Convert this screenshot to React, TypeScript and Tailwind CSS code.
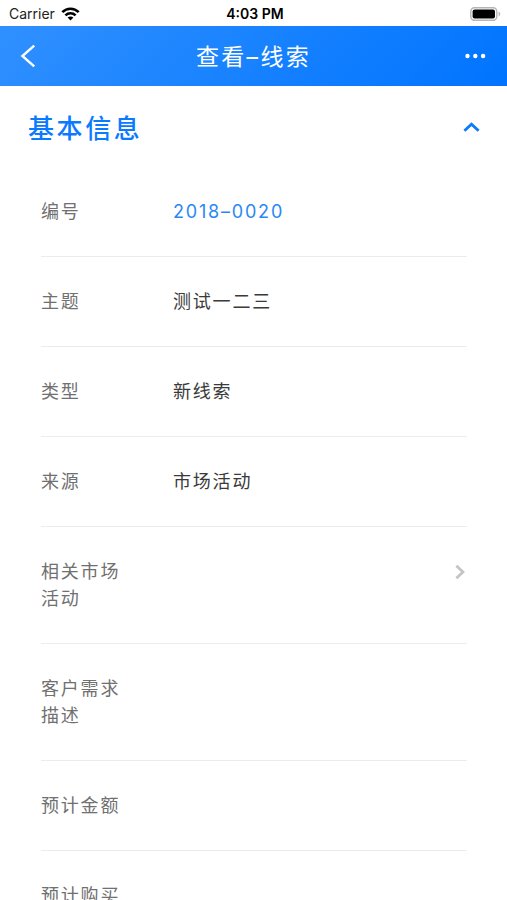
import React from "react"

type Field = { id: string, label: string, value?: string, highlight?: boolean, picker?: boolean }

const fields: Field[] = [
  { id: "code", label: "编号", value: "2018–0020", highlight: true },
  { id: "subject", label: "主题", value: "测试一二三" },
  { id: "type", label: "类型", value: "新线索" },
  { id: "source", label: "来源", value: "市场活动" },
  { id: "campaign", label: "相关市场活动", picker: true },
  { id: "demand", label: "客户需求描述" },
  { id: "amount", label: "预计金额" },
  { id: "purchase", label: "预计购买" },
]

const StatusBar = () => (
  <div className="grid h-[26px] shrink-0 grid-cols-3 items-center pt-[2px] pr-[6px] pl-[9px] text-[14px] leading-[20px] text-[#222]">
    <div className="flex items-center gap-[6px]">
      <span>Carrier</span>
      <svg width="19" height="14" viewBox="0 0 19 14" fill="none" stroke="#000" strokeWidth="2.6">
        <path d="M1.3 5.2C6 0.5 13 0.5 17.7 5.2" />
        <path d="M4.4 8.4C7.3 5.6 11.7 5.6 14.6 8.4" />
        <path d="M9.5 13.6L6.6 10.6C8.2 9.2 10.8 9.2 12.4 10.6Z" fill="#000" stroke="none" />
      </svg>
    </div>
    <span className="text-center font-semibold text-black">4:03 PM</span>
    <svg className="justify-self-end" width="31" height="14" viewBox="0 0 31 14">
      <rect x="0.8" y="0.8" width="26" height="12.4" rx="3.6" fill="#fff" stroke="#b5b5b5" strokeWidth="1.4" />
      <rect x="2.6" y="2.6" width="22.4" height="8.8" rx="2" fill="#000" />
      <path d="M28.6 4.6C30.8 5.4 30.8 8.6 28.6 9.4Z" fill="#b5b5b5" />
    </svg>
  </div>
)

const NavBar = () => (
  <header className="flex h-[60px] shrink-0 items-center justify-between bg-linear-[135deg] from-[#3090ff] to-[#0074ff] px-[20px] text-white">
    <button type="button" aria-label="返回" className="flex w-[24px]">
      <svg width="16" height="24" viewBox="0 0 16 24" fill="none" stroke="currentColor" strokeWidth="2.4">
        <path d="M14.2 1.6L2.4 12L14.2 22.4" />
      </svg>
    </button>
    <h1 className="pt-[2px] text-[23px] leading-[30px] tracking-widest">查看–线索</h1>
    <button type="button" aria-label="更多" className="flex w-[24px] justify-end">
      <svg width="22" height="6" viewBox="0 0 22 6" fill="currentColor">
        <circle cx="2.5" cy="3" r="2.2" />
        <circle cx="10.3" cy="3" r="2.2" />
        <circle cx="18.1" cy="3" r="2.2" />
      </svg>
    </button>
  </header>
)

const FieldRow = ({ field }: { field: Field }) => (
  <div className="flex items-start border-b border-[#ececec] py-[31px]">
    <dt className="w-[84px] shrink-0 text-[#707070]">{field.label}</dt>
    <dd className={`ml-[48px] flex-1 ${field.highlight ? "text-[#2a88f5]" : "text-[#3a3a3a]"}`}>{field.value}</dd>
    {field.picker && (
      <button type="button" aria-label={field.label} className="flex h-[27px] w-[15px] items-center justify-center text-[#c4c4c4]">
        <svg width="10" height="16" viewBox="0 0 10 16" fill="none" stroke="currentColor" strokeWidth="2.8">
          <path d="M1.4 1.8L8 8L1.4 14.2" />
        </svg>
      </button>
    )}
  </div>
)

export default function App() {
  return (
    <div className="flex h-screen flex-col bg-white font-['Inter','Noto_Sans_CJK_SC',sans-serif]">
      <StatusBar />
      <NavBar />
      <main className="min-h-0 flex-1 overflow-y-auto">
        <section>
          <div className="flex h-[81px] items-center justify-between pr-[27px] pl-[28px] text-[#0a7aff]">
            <h2 className="pt-[4px] text-[26px] leading-[36px] font-medium tracking-widest">基本信息</h2>
            <button type="button" aria-label="收起" aria-expanded="true">
              <svg width="17" height="10" viewBox="0 0 17 10" fill="none" stroke="currentColor" strokeWidth="2.8">
                <path d="M1.4 8.8L8.5 2.2L15.6 8.8" />
              </svg>
            </button>
          </div>
          <dl className="mr-[40px] ml-[41px] text-[18px] leading-[27px] tracking-widest">
            {fields.map((field) => (
              <FieldRow key={field.id} field={field} />
            ))}
          </dl>
        </section>
      </main>
    </div>
  )
}
